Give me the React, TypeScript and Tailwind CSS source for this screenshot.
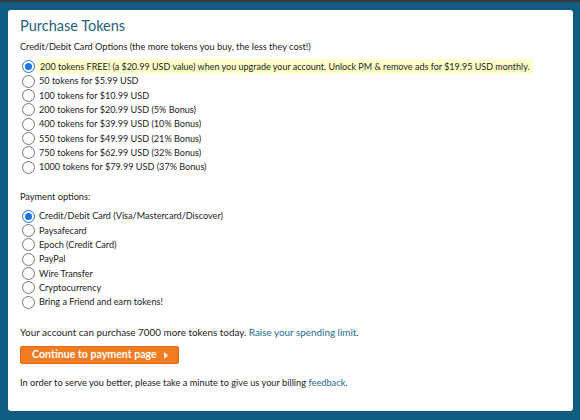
import React from "react";

const tokenOptions = [
  "50 tokens for $5.99 USD",
  "100 tokens for $10.99 USD",
  "200 tokens for $20.99 USD (5% Bonus)",
  "400 tokens for $39.99 USD (10% Bonus)",
  "550 tokens for $49.99 USD (21% Bonus)",
  "750 tokens for $62.99 USD (32% Bonus)",
  "1000 tokens for $79.99 USD (37% Bonus)",
];

const paymentOptions = [
  "Credit/Debit Card (Visa/Mastercard/Discover)",
  "Paysafecard",
  "Epoch (Credit Card)",
  "PayPal",
  "Wire Transfer",
  "Cryptocurrency",
  "Bring a Friend and earn tokens!",
];

function Radio({ checked }: { checked?: boolean }) {
  return (
    <span
      className={`w-[13px] h-[13px] rounded-full shrink-0 flex items-center justify-center bg-white ${
        checked ? "border-[1.5px] border-[#1a73e8]" : "border border-[#767676]"
      }`}
    >
      {checked && <span className="w-[7px] h-[7px] rounded-full bg-[#1a73e8]" />}
    </span>
  );
}

export default function App() {
  return (
    <div
      className="w-[580px] h-[420px] bg-[#0f5c80] border-t-2 border-[#3a3a3a] pt-[8px] pl-[8px] pr-[7px] pb-[9px] text-[#222]"
      style={{ fontFamily: "Lato, 'Noto Sans', sans-serif" }}
    >
      <div className="bg-white rounded-[3px] h-full pl-[12px] pt-[6px]">
        <h1 className="text-[14.5px] leading-[20px] text-[#1d5f80]">Purchase Tokens</h1>
        <p className="text-[9.2px] leading-[14px] mt-[4px]">
          Credit/Debit Card Options (the more tokens you buy, the less they cost!)
        </p>

        {/* token choices */}
        <div className="mt-[4px] text-[9.1px]">
          <label className="flex items-center gap-[2px] pl-[2px] h-[16px]">
            <Radio checked />
            <span className="bg-[#ffffcc] px-[3px] leading-[15px] whitespace-nowrap text-[9px]">
              200 tokens FREE! (a $20.99 USD value) when you upgrade your account. Unlock PM &amp; remove ads for $19.95 USD monthly.
            </span>
          </label>
          {tokenOptions.map((t) => (
            <label key={t} className="flex items-center gap-[4px] pl-[2px] h-[14.35px]">
              <Radio />
              <span>{t}</span>
            </label>
          ))}
        </div>

        <p className="text-[9.2px] leading-[14px] mt-[16px]">Payment options:</p>
        <div className="mt-[4.6px] text-[9.1px]">
          {paymentOptions.map((t, i) => (
            <label key={t} className="flex items-center gap-[4px] pl-[2px] h-[14.35px]">
              <Radio checked={i === 0} />
              <span>{t}</span>
            </label>
          ))}
        </div>

        <p className="text-[9.9px] leading-[14px] mt-[15.7px] whitespace-nowrap">
          Your account can purchase 7000 more tokens today.{" "}
          <a className="text-[#1d6a8e]">Raise your spending limit</a>.
        </p>

        <button className="mt-[7px] h-[18px] w-[159px] bg-[#f47b20] border border-[#e06a10] rounded-[2px] text-white text-[10.6px] font-bold flex items-center pl-[11px] gap-[7px]">
          <span className="whitespace-nowrap">Continue to payment page</span>
          <svg width="4" height="7" viewBox="0 0 4 7">
            <path d="M0 0 L4 3.5 L0 7 Z" fill="white" />
          </svg>
        </button>

        <p className="text-[9.25px] leading-[14px] mt-[12px] whitespace-nowrap">
          In order to serve you better, please take a minute to give us your billing{" "}
          <a className="text-[#1d6a8e]">feedback</a>.
        </p>
      </div>
    </div>
  );
}
